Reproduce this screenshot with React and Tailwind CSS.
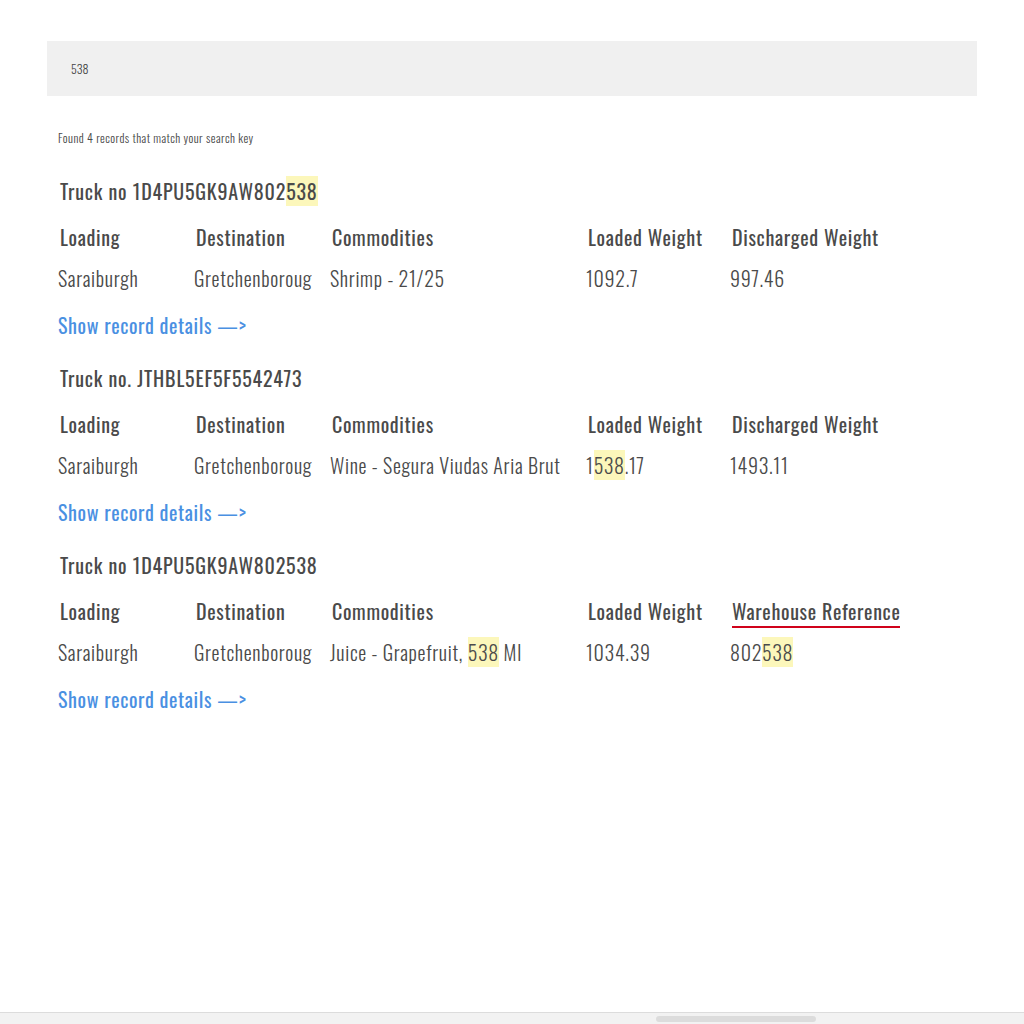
const HL = ({ children }) => <span className="bg-[#fcf7bb]">{children}</span>;

const records = [
  {
    title: <>Truck no 1D4PU5GK9AW802<HL>538</HL></>,
    commodity: <>Shrimp - 21/25</>,
    loaded: <>1092.7</>,
    lastHead: 'Discharged Weight',
    last: <>997.46</>,
  },
  {
    title: <>Truck no. JTHBL5EF5F5542473</>,
    commodity: <>Wine - Segura Viudas Aria Brut</>,
    loaded: <>1<HL>538</HL>.17</>,
    lastHead: 'Discharged Weight',
    last: <>1493.11</>,
  },
  {
    title: <>Truck no 1D4PU5GK9AW802538</>,
    commodity: <>Juice - Grapefruit, <HL>538</HL> Ml</>,
    loaded: <>1034.39</>,
    lastHead: 'Warehouse Reference',
    underline: true,
    last: <>802<HL>538</HL></>,
  },
];

function Record({ r }) {
  return (
    <div className="flex flex-col">
      <div className="h-[28px] flex items-center pl-[2px] text-[20px] tracking-[0.04em] text-[#4a4a4a] leading-[28px]">
        <span>{r.title}</span>
      </div>
      <div className="grid grid-cols-[136px_136px_256px_144px_1fr] grid-rows-[28px] mt-[18px] text-[20px] tracking-[0.033em] text-[#4a4a4a] leading-[28px]">
        <div className="pl-[2px]">Loading</div>
        <div className="pl-[2px]">Destination</div>
        <div className="pl-[2px]">Commodities</div>
        <div className="pl-[2px]">Loaded Weight</div>
        <div className="pl-[2px] h-[28px]">
          <span className={r.underline ? 'inline-block border-b-2 border-[#d0021b] leading-[28px] pb-[1px]' : ''}>{r.lastHead}</span>
        </div>
      </div>
      <div className="grid grid-cols-[136px_136px_256px_144px_1fr] mt-[13px] text-[20px] font-light tracking-[0.033em] text-[#4a4a4a] leading-[28px]">
        <div>Saraiburgh</div>
        <div>Gretchenboroug</div>
        <div>{r.commodity}</div>
        <div>{r.loaded}</div>
        <div>{r.last}</div>
      </div>
      <div className="mt-[19px] text-[20px] tracking-[0.03em] text-[#4a90e2] leading-[28px]">
        Show record details —&gt;
      </div>
    </div>
  );
}

export default function App() {
  return (
    <div className="h-[1024px] flex flex-col bg-white" style={{ fontFamily: 'Oswald, "Roboto Condensed", sans-serif' }}>
      <div className="flex-1 pt-[41px] px-[47px]">
        <div className="h-[55px] bg-[#f0f0f0] flex items-center pl-[24px] text-[12px] font-light text-[#444]">
          538
        </div>
        <div className="px-[11px]">
          <div className="mt-[34px] text-[12px] font-light tracking-[0.035em] text-[#4a4a4a] leading-[16px]">Found 4 records that match your search key</div>
          <div className="mt-[31px] flex flex-col gap-[25px]">
            {records.map((r, i) => (
              <Record key={i} r={r} />
            ))}
          </div>
        </div>
      </div>
      <div className="h-[12px] border-t border-[#dcdcdc] bg-[#f2f2f2] flex items-center">
        <div className="ml-[656px] w-[160px] h-[6px] rounded-full bg-[#dcdcdc]" />
      </div>
    </div>
  );
}
